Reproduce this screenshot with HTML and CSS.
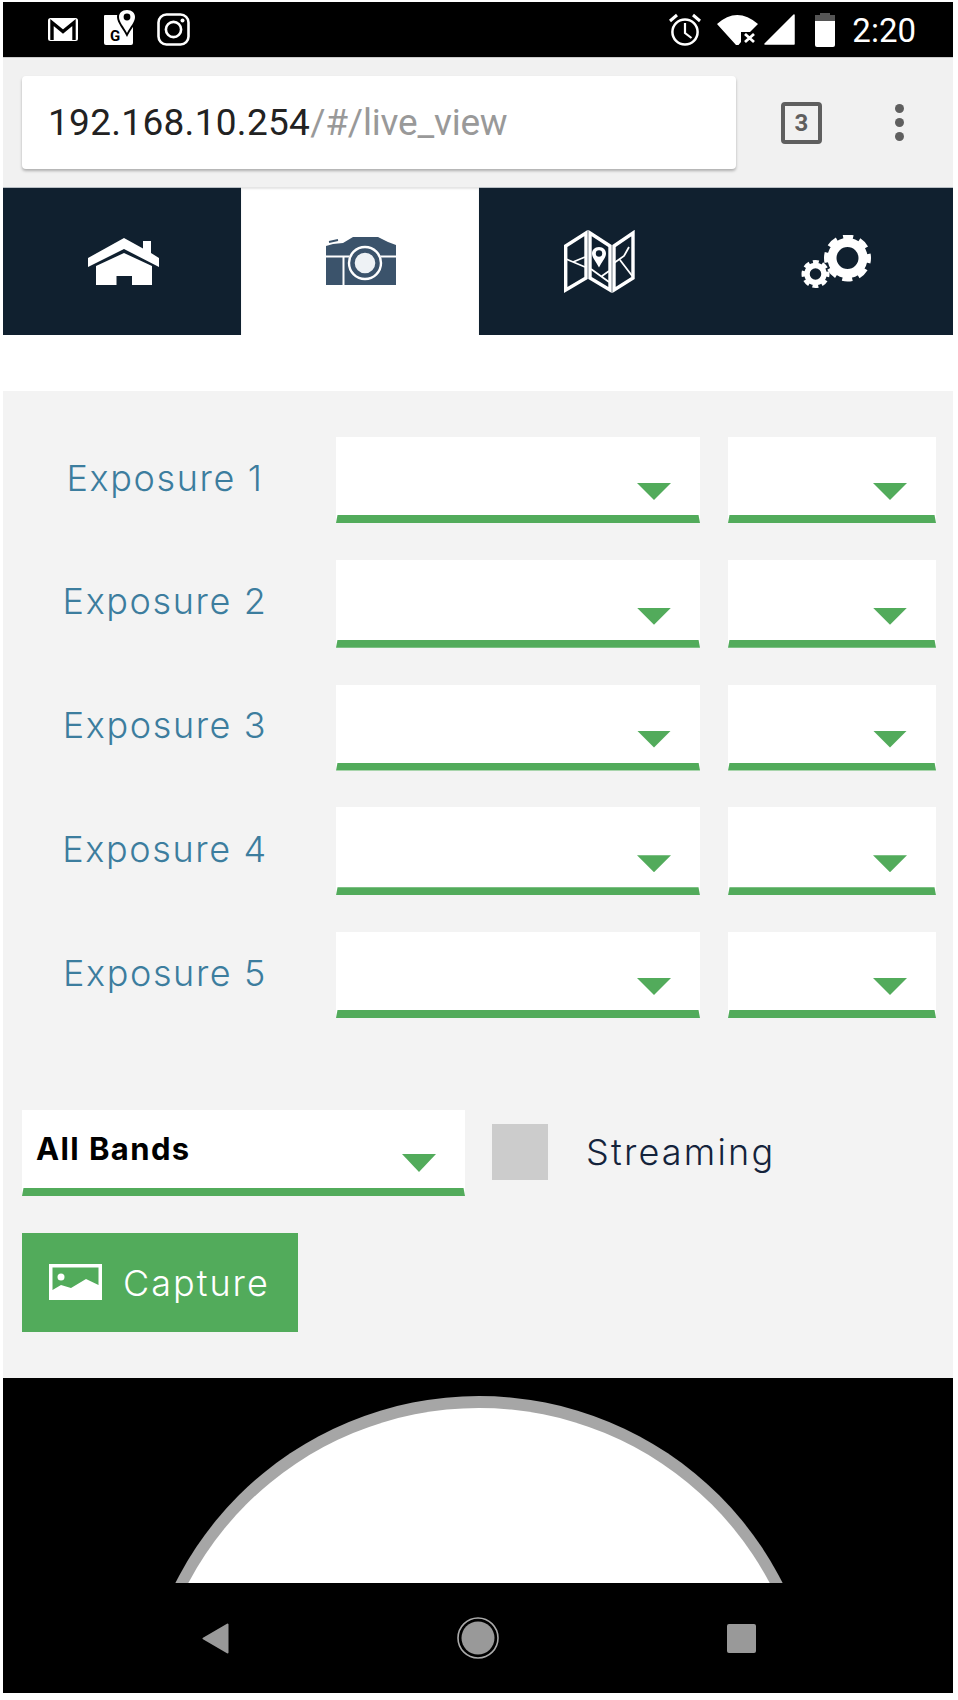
FILE: index.html
```html
<!DOCTYPE html>
<html lang="en">
<head>
<meta charset="utf-8">
<title>Live view</title>
<link rel="stylesheet" href="styles.css">
</head>
<body>
<div class="device">
  <header class="status">
    <div class="status-left">
      <svg class="ic-gmail" viewBox="0 0 32 25"><rect x="1" y="1" width="30" height="23" rx="2.5" fill="#fff"/><path d="M5 23V5.500L16 14.500 27 5.500V23" fill="none" stroke="#000" stroke-width="3.400"/></svg>
      <svg class="ic-maps" viewBox="0 0 31 35"><path d="M1 5H29V33a2 2 0 0 1-2 2H2a2 2 0 0 1-2-2V6a1 1 0 0 1 1-1z" fill="#fff"/><path d="M23 -2c6 0 10 4 10 9 0 6-7 13-10 20-3-7-10-14-10-20 0-5 4-9 10-9z" fill="#000"/><path d="M23 0c5 0 8 3 8 7 0 5-5 10-8 16-3-6-8-11-8-16 0-4 3-7 8-7z" fill="#fff"/><circle cx="23" cy="7" r="3.400" fill="#000"/><text class="g" x="6" y="31">G</text></svg>
      <svg class="ic-insta" viewBox="0 0 33 33"><rect x="1.500" y="1.500" width="30" height="30" rx="8" fill="none" stroke="#fff" stroke-width="2.600"/><circle cx="16.500" cy="16.500" r="7.600" fill="none" stroke="#fff" stroke-width="2.600"/><circle cx="25.500" cy="7.500" r="2" fill="#fff"/></svg>
    </div>
    <div class="status-right">
      <svg class="ic-alarm" viewBox="0 0 32 33"><circle cx="16" cy="19" r="12.600" fill="none" stroke="#fff" stroke-width="2.500"/><path d="M16 10V20L22.500 25" fill="none" stroke="#fff" stroke-width="2.200"/><path d="M1 8L8 2M24 2L31 8" stroke="#fff" stroke-width="3"/></svg>
      <svg class="ic-wifi" viewBox="0 0 41 30"><path d="M0 9Q20 -9 41 9L33 17H24V27L21.500 30Q20 30.600 19 30Z" fill="#fff"/><path d="M28 19L37 27M37 19L28 27" stroke="#fff" stroke-width="2.800"/></svg>
      <svg class="ic-signal" viewBox="0 0 31 31"><path d="M1 30L30 1V30Z" fill="#fff" stroke="#fff" stroke-width="1.500" stroke-linejoin="round"/></svg>
      <svg class="ic-battery" viewBox="0 0 20 34"><path d="M5 0H15V2H20V8H0V2H5Z" fill="#555"/><path d="M0 8H20V32a2 2 0 0 1-2 2H2a2 2 0 0 1-2-2Z" fill="#fff"/></svg>
      <span class="clock">2:20</span>
    </div>
  </header>

  <div class="toolbar">
    <div class="url"><span class="host">192.168.10.254</span><span class="path">/#/live_view</span></div>
    <div class="tabs-count">3</div>
    <div class="dots"><i></i><i></i><i></i></div>
  </div>

  <nav class="nav">
    <a class="tab">
      <svg class="ic-home" viewBox="0 0 71 47"><path d="M0 20L36 0 55 10.500V3H63V15L71 20V29L36 11 0 29Z" fill="#fff"/><path d="M8 28L36 15 64 28V47H44V38H28.500V47H8Z" fill="#fff"/></svg>
    </a>
    <a class="tab tab-active">
      <svg class="ic-camera" viewBox="0 0 70 48"><path d="M0 9L7 7 17 6 27 0H52L62 5 70 8V48H0Z" fill="#3b536b"/><path d="M0 19.500H70M17.500 19.500V48" stroke="#fff" stroke-width="2"/><path d="M3 5L12 3" stroke="#3b536b" stroke-width="2"/><circle cx="39" cy="26" r="17" fill="#3b536b"/><circle cx="39" cy="26" r="16" fill="none" stroke="#fff" stroke-width="2.400"/><circle cx="39" cy="26" r="11.500" fill="#eef2f5" stroke="#3b536b" stroke-width="2.400"/></svg>
    </a>
    <a class="tab">
      <svg class="ic-map" viewBox="0 0 71 63"><g fill="none" stroke="#fff" stroke-width="3.400"><path d="M1.700 16L22 3V48L1.700 60Z"/><path d="M26 3L46 16V60L26 48Z"/><path d="M50 16L69 3V48L50 60Z"/></g><g fill="none" stroke="#fff" stroke-width="1.800"><path d="M2 29L21 37M21 27L9 32"/><path d="M27 39L45 52M45 41L38 46"/><path d="M50 33L60 26 65 17M56 30L69 47"/></g><path d="M35 17c4.500 0 7 3 7 6.500 0 4-4 8-7 14-3-6-7-10-7-14 0-3.500 2.500-6.500 7-6.500z" fill="#fff"/><circle cx="35" cy="23.500" r="3.200" fill="#10202f"/></svg>
    </a>
    <a class="tab">
      <svg class="ic-gears" viewBox="0 0 70 53"><g fill="none" stroke="#fff"><circle cx="46.500" cy="23" r="15.500" stroke-width="9"/><circle cx="46.500" cy="23" r="21" stroke-width="5" stroke-dasharray="10 6.490" stroke-dashoffset="5"/><circle cx="14.500" cy="39" r="8.500" stroke-width="5.500"/><circle cx="14.500" cy="39" r="12" stroke-width="4" stroke-dasharray="5.800 3.620" stroke-dashoffset="2.900"/></g></svg>
    </a>
  </nav>

  <main class="panel">
    <div class="rows">
      <div class="row"><label class="exp-label">Exposure 1</label><div class="field field-wide"><span class="arrow"></span><span class="line"></span></div><div class="field field-narrow"><span class="arrow"></span><span class="line"></span></div></div>
      <div class="row"><label class="exp-label">Exposure 2</label><div class="field field-wide"><span class="arrow"></span><span class="line"></span></div><div class="field field-narrow"><span class="arrow"></span><span class="line"></span></div></div>
      <div class="row"><label class="exp-label">Exposure 3</label><div class="field field-wide"><span class="arrow"></span><span class="line"></span></div><div class="field field-narrow"><span class="arrow"></span><span class="line"></span></div></div>
      <div class="row"><label class="exp-label">Exposure 4</label><div class="field field-wide"><span class="arrow"></span><span class="line"></span></div><div class="field field-narrow"><span class="arrow"></span><span class="line"></span></div></div>
      <div class="row"><label class="exp-label">Exposure 5</label><div class="field field-wide"><span class="arrow"></span><span class="line"></span></div><div class="field field-narrow"><span class="arrow"></span><span class="line"></span></div></div>
    </div>
    <div class="controls">
      <div class="band">
        <div class="band-body"><span class="band-text">All Bands</span><span class="arrow band-arrow"></span></div>
        <span class="line"></span>
      </div>
      <span class="check"></span>
      <span class="streaming">Streaming</span>
    </div>
    <button class="capture">
      <svg class="ic-picture" viewBox="0 0 53 36"><path d="M0 0H53V36H0ZM3.500 3.500V26L12 21 22 24 37 15 49.500 21V3.500Z" fill="#fff" fill-rule="evenodd"/><circle cx="12" cy="13" r="3.500" fill="#fff"/></svg>
      <span>Capture</span>
    </button>
  </main>

  <section class="viewer">
    <svg class="dome" viewBox="0 0 950 205"><circle cx="476" cy="358" r="340" fill="#a6a6a6"/><circle cx="476" cy="359" r="329" fill="#fff"/></svg>
    <div class="softkeys">
      <span class="key"><svg class="ic-back" viewBox="0 0 27 31"><path d="M25.500 1.500V29.500L1.500 15.500Z" fill="#999" stroke="#999" stroke-width="2" stroke-linejoin="round"/></svg></span>
      <span class="key"><svg class="ic-homekey" viewBox="0 0 42 42"><circle cx="21" cy="21" r="20" fill="none" stroke="#aaa" stroke-width="1.600"/><circle cx="21" cy="21" r="16.500" fill="#999"/></svg></span>
      <span class="key"><span class="recent"></span></span>
    </div>
  </section>
</div>
</body>
</html>
```

FILE: styles.css
```css
* { box-sizing: border-box; }
html, body { margin: 0; padding: 0; background: #fff; }
body { font-family: "Inter", "Liberation Sans", sans-serif; }
svg { display: block; flex: none; }

.device { width: 950px; margin: 2px 5px 7px 3px; display: flex; flex-direction: column; }

/* status bar */
.status { height: 55px; background: #000; display: flex; justify-content: space-between; align-items: center; padding: 0 37px 0 44px; }
.status-left, .status-right { display: flex; align-items: center; }
.ic-gmail { width: 32px; height: 25px; }
.ic-maps { width: 31px; height: 35px; margin-left: 25px; margin-top: -5px; overflow: visible; }
.ic-insta { width: 33px; height: 33px; margin-left: 22px; }
.g { font-family: "Roboto", sans-serif; font-size: 15px; font-weight: 700; fill: #000; }
.ic-alarm { width: 32px; height: 33px; }
.ic-wifi { width: 41px; height: 30px; margin-left: 16px; }
.ic-signal { width: 31px; height: 31px; margin-left: 6px; }
.ic-battery { width: 20px; height: 34px; margin-left: 20px; }
.clock { font-family: "Roboto", sans-serif; font-size: 33px; color: #fff; margin: 2px 0 0 17px; line-height: 1; }

/* browser toolbar */
.toolbar { height: 130px; background: #f1f1f1; border-top: 1px solid #ccc; display: flex; align-items: center; padding: 0 0 0 19px; }
.url { width: 714px; height: 93px; background: #fff; border-radius: 4px; box-shadow: 0 2px 3px rgba(0,0,0,.28); font-family: "Roboto", sans-serif; font-size: 37px; line-height: 93px; padding-left: 26px; white-space: nowrap; }
.host { color: #222; letter-spacing: .3px; }
.path { color: #999; letter-spacing: -.2px; }
.tabs-count { width: 41px; height: 42px; border: 4px solid #5f5f5f; border-radius: 4px; margin-left: 45px; font-family: "Roboto", sans-serif; font-weight: 700; font-size: 24px; color: #5f5f5f; display: flex; align-items: center; justify-content: center; }
.dots { display: flex; flex-direction: column; gap: 5px; margin-left: 73px; }
.dots i { width: 9px; height: 9px; border-radius: 50%; background: #5f5f5f; display: block; }

/* app nav */
.nav { height: 148px; background: #10202f; display: grid; grid-template-columns: 238px 238px 238px 236px; box-shadow: inset 0 1px 0 #b8bec4; }
.tab { display: flex; align-items: center; justify-content: center; padding-left: 2px; }
.tab-active { background: #fff; box-shadow: inset 0 2px 2px #e4e4e4; }
.ic-home { width: 71px; height: 47px; }
.ic-camera { width: 70px; height: 48px; }
.ic-map { width: 71px; height: 63px; }
.ic-gears { width: 70px; height: 53px; }

/* exposure panel */
.panel { margin-top: 56px; background: #f3f3f3; padding: 46px 0; }
.rows { display: flex; flex-direction: column; gap: 36.75px; }
.row { height: 86px; display: flex; }
.row:nth-child(even) { height: 88px; }
.exp-label { width: 324px; margin: 0 9px 5px 0; align-self: center; text-align: center; color: #3c7d9e; font-size: 36px; font-weight: 300; letter-spacing: 1.6px; line-height: 40px; }
.field { background: #fff; display: flex; flex-direction: column; justify-content: flex-end; }
.field-wide { width: 364px; }
.field-narrow { width: 208px; margin-left: 28px; }
.arrow { display: block; width: 34px; height: 17px; background: #52ab5b; clip-path: polygon(0 0, 100% 0, 50% 100%); align-self: flex-end; margin: 0 29px 15px 0; flex: none; }
.line { display: block; height: 8px; background: #52ab5b; clip-path: polygon(1.5px 0, calc(100% - 1.5px) 0, 100% 100%, 0 100%); flex: none; }

.controls { display: flex; align-items: center; margin: 92px 0 0 19px; }
.band { width: 443px; height: 86px; background: #fff; display: flex; flex-direction: column; }
.band-body { flex: 1; display: flex; justify-content: space-between; align-items: flex-start; padding-left: 14px; }
.band-text { font-weight: 700; font-size: 31px; letter-spacing: 1.4px; line-height: 36px; color: #000; margin-top: 21px; }
.band-arrow { height: 18px; margin: 44px 29px 0 0; align-self: flex-start; }
.check { width: 56px; height: 56px; background: #ccc; margin: 0 0 2px 27px; flex: none; }
.streaming { margin: 0 0 2px 38px; font-size: 36px; font-weight: 300; letter-spacing: 2.2px; color: #14233b; line-height: 40px; }

.capture { display: flex; align-items: center; width: 276px; height: 99px; margin: 37px 0 0 19px; padding: 0 0 0 27px; border: 0; background: #52ab5b; color: #fff; font-family: inherit; font-size: 36px; font-weight: 300; letter-spacing: 2px; }
.ic-picture { width: 53px; height: 36px; margin-right: 21px; margin-top: -2px; }

/* viewer + soft keys */
.viewer { background: #000; height: 315px; display: flex; flex-direction: column; justify-content: flex-end; }
.dome { width: 950px; height: 205px; }
.softkeys { height: 110px; display: grid; grid-template-columns: repeat(3, 263px); justify-content: center; }
.key { display: flex; align-items: center; justify-content: center; }
.ic-back { width: 27px; height: 31px; }
.ic-homekey { width: 42px; height: 42px; }
.recent { width: 29px; height: 29px; background: #999; border-radius: 2px; }
```
